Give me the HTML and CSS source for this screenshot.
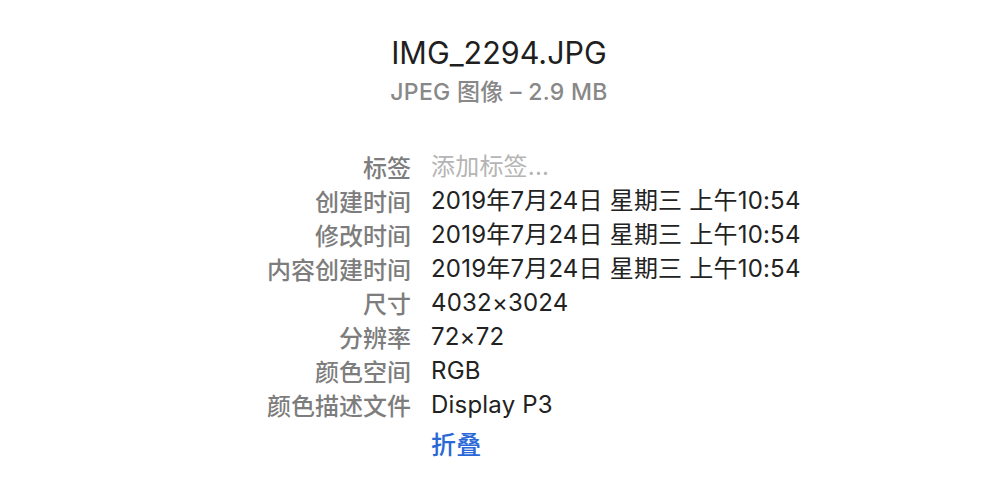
FILE: index.html
```html
<!DOCTYPE html>
<html lang="zh-CN">
<head>
    <meta charset="UTF-8">
    <meta name="viewport" content="width=device-width, initial-scale=1.0">
    <title>IMG_2294.JPG 简介</title>
    <link rel="stylesheet" href="styles.css">
</head>
<body>
    <div class="file-info">
        <div class="file-head">
            <div class="file-name">IMG_2294.JPG</div>
            <div class="file-kind">JPEG 图像 – 2.9 MB</div>
        </div>

        <div class="details">
            <div class="label">标签</div>
            <div class="value placeholder">添加标签...</div>

            <div class="label">创建时间</div>
            <div class="value">2019年7月24日 星期三 上午10:54</div>

            <div class="label">修改时间</div>
            <div class="value">2019年7月24日 星期三 上午10:54</div>

            <div class="label">内容创建时间</div>
            <div class="value">2019年7月24日 星期三 上午10:54</div>

            <div class="label">尺寸</div>
            <div class="value">4032×3024</div>

            <div class="label">分辨率</div>
            <div class="value">72×72</div>

            <div class="label">颜色空间</div>
            <div class="value">RGB</div>

            <div class="label">颜色描述文件</div>
            <div class="value">Display P3</div>

            <div class="label"></div>
            <div class="value"><a class="toggle" href="#">折叠</a></div>
        </div>
    </div>
</body>
</html>
```

FILE: styles.css
```css
body {
    font-family: Inter, "Noto Sans CJK SC", sans-serif;
    background-color: #ffffff;
    color: #262626;
    margin: 0;
}
.file-info {
    padding-top: 35px;
}
.file-head {
    text-align: center;
}
.file-name {
    font-size: 30.5px;
    line-height: 36px;
    color: #1f1f1f;
}
.file-kind {
    font-size: 23px;
    line-height: 28px;
    font-weight: 500;
    letter-spacing: 0.3px;
    color: #888888;
    margin-top: 7px;
}
.details {
    display: grid;
    grid-template-columns: 160px auto;
    column-gap: 20px;
    margin: 44px 0 0 251px;
    font-size: 24px;
    line-height: 34px;
}
.label {
    text-align: right;
    color: #7d7d7d;
    font-weight: 500;
    font-family: "Noto Sans CJK SC", sans-serif;
}
.value {
    color: #222222;
    letter-spacing: 0.2px;
}
.placeholder {
    color: #b5b5b5;
}
.toggle {
    display: inline-block;
    margin-top: 6px;
    font-size: 25px;
    color: #2a68d8;
    font-weight: 500;
    text-decoration: none;
}
```
